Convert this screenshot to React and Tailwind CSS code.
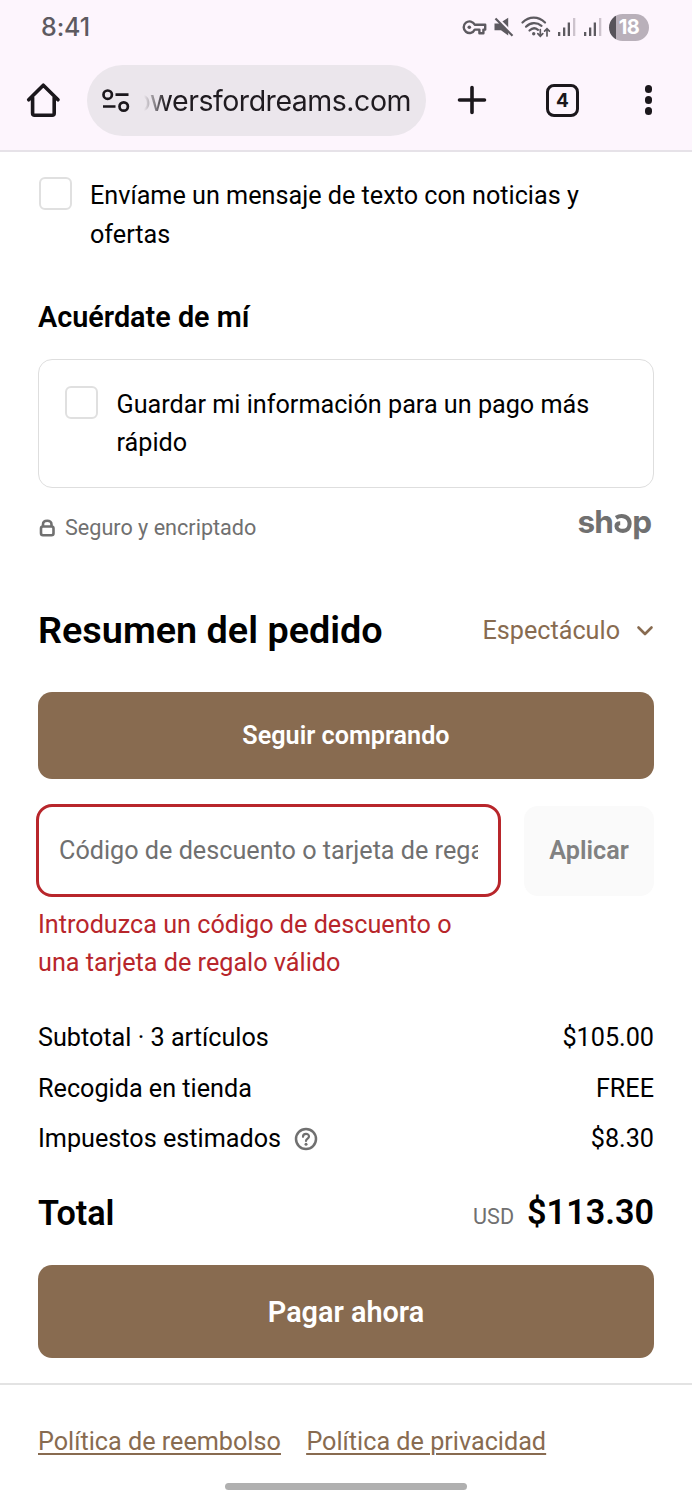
import React from "react";

const summaryRows = [
    { label: "Subtotal · 3 artículos", value: "$105.00" },
    { label: "Recogida en tienda", value: "FREE" },
    { label: "Impuestos estimados", value: "$8.30", help: true },
];

function SignalIcon() {
    return (
        <svg width="18" height="20" viewBox="0 0 18 20" fill="#5d5a60">
            <rect x="0" y="15" width="2.300" height="4" />
            <rect x="5" y="10.500" width="2.300" height="8.500" />
            <rect x="9.700" y="5.500" width="2.300" height="13.500" />
            <rect x="15" y="1" width="2.300" height="18" fill="#cdc3cd" />
        </svg>
    );
}

function StatusBar() {
    return (
        <div className="h-[54px] pl-[41px] pr-[43px] flex items-center justify-between text-[#5d5a60]">
            <span className="font-['Inter'] text-[25px] leading-none font-medium tracking-[-0.1px]">8:41</span>
            <div className="flex items-center">
                <svg width="25" height="18" viewBox="0 0 25 18" fill="none" stroke="#5d5a60" strokeWidth="2.400" strokeLinejoin="round" className="mt-[2px]">
                    <path d="M12.800 5.800H23.200V10.600H21.400V14.200H17.400V10.600H12.800A5.800 5.800 0 1 1 12.800 5.800Z" />
                    <circle cx="7.300" cy="8.200" r="1.800" fill="#5d5a60" stroke="none" />
                </svg>
                <svg width="20" height="20" viewBox="0 0 20 20" className="ml-[7px]">
                    <path d="M0.500 6.500H5.200L14.200 0.800V18.600L7 13.300H0.500Z" fill="#5d5a60" />
                    <path d="M0.500 -1.500L20.500 18.500" stroke="#fdf5fd" strokeWidth="3" />
                    <path d="M1.500 1.500L18.500 18.800" stroke="#5d5a60" strokeWidth="2.200" />
                </svg>
                <svg width="30" height="22" viewBox="0 0 30 22" fill="none" stroke="#5d5a60" strokeWidth="2.200" strokeLinecap="round" className="ml-[7px]">
                    <path d="M1.500 6.500C8 0 17.500 0 24 6.500" />
                    <path d="M5 10.700C9.500 6 16 6 20.500 9.800" />
                    <path d="M8.500 14.500C11.300 11.800 14.500 11.800 17 13.800" />
                    <circle cx="12.700" cy="17.800" r="1.700" fill="#5d5a60" stroke="none" />
                    <path d="M19.300 13.500V20M16.800 17.700L19.300 20.200L21.800 17.700M26 20V13M23.600 15.200L26 12.700L28.400 15.200" strokeWidth="1.700" />
                </svg>
                <span className="ml-[7px]"><SignalIcon /></span>
                <span className="ml-[8px]"><SignalIcon /></span>
                <div className="ml-[7px] w-[40px] h-[27px] rounded-full overflow-hidden bg-[linear-gradient(to_right,#57535a_7px,#b9b0ba_7px)] flex items-center justify-center text-white font-['Inter'] text-[20px] leading-none font-bold tracking-[-0.5px]">
                    18
                </div>
            </div>
        </div>
    );
}

function BrowserBar() {
    return (
        <div className="h-[96px] pb-[4px] pl-[26px] pr-[42px] flex items-center">
            <svg width="35" height="36" viewBox="0 0 35 36" fill="none" stroke="#1b171c" strokeWidth="3.600" strokeLinecap="round" strokeLinejoin="round">
                <path d="M2.700 17.800L17.300 3.200L32 17.800M6.600 15.500V31.200Q6.600 33.200 8.600 33.200H26.200Q28.200 33.200 28.200 31.200V15.500" />
            </svg>
            <div className="ml-[26px] w-[339px] h-[71px] rounded-full bg-[#ebe6ec] flex items-center pl-[15px] pt-[1px]">
                <svg width="28" height="24" viewBox="0 0 28 24" fill="none" stroke="#1b171c" strokeWidth="2.700">
                    <circle cx="5.700" cy="5.700" r="4.200" />
                    <path d="M13.500 5.700H26.500M1 17.500H13.500" />
                    <circle cx="21.700" cy="17.500" r="4.200" />
                </svg>
                <div className="ml-[14px] w-[267px] h-[40px] overflow-hidden flex justify-end [mask-image:linear-gradient(to_right,transparent,black_22px)]">
                    <span className="font-['Inter'] text-[28.5px] leading-[40px] tracking-[-0.48px] text-[#1f1b20] whitespace-nowrap">
                        flowersfordreams.com
                    </span>
                </div>
            </div>
            <svg width="30" height="30" viewBox="0 0 30 30" stroke="#1b171c" strokeWidth="3.600" strokeLinecap="round" className="ml-[31px]">
                <path d="M15 2.500V27.500M2.500 15H27.500" />
            </svg>
            <div className="ml-[59px] size-[33px] rounded-[8px] border-[3.5px] border-[#1b171c] flex items-center justify-center font-['Inter'] text-[19px] leading-none font-bold text-[#1b171c]">
                4
            </div>
            <div className="ml-auto mr-[-2px] flex flex-col gap-[3.5px]">
                <span className="size-[7.5px] rounded-full bg-[#1b171c]" />
                <span className="size-[7.5px] rounded-full bg-[#1b171c]" />
                <span className="size-[7.5px] rounded-full bg-[#1b171c]" />
            </div>
        </div>
    );
}

function Checkbox() {
    return <span className="shrink-0 size-[33px] rounded-[6px] border-2 border-[#e0e0e0] bg-white" />;
}

function ShopLogo() {
    return (
        <div className="flex items-baseline font-['Inter'] font-bold text-[31.500px] leading-[34px] text-[#707070]">
            <span className="tracking-[-0.8px]">sh</span>
            <svg width="18" height="20" viewBox="0 0 18 20" fill="none" stroke="#707070" strokeWidth="4.100" className="ml-[1px] mr-[0px]">
                <path d="M2 4.800C8.300 0.800 15.600 4 15.600 10.800C15.600 15.300 12.800 17.900 9 17.900C5.400 17.900 2.500 16 2.500 13.200C2.500 11.300 4 10.200 6.200 10.200" />
            </svg>
            <span>p</span>
        </div>
    );
}

export default function App() {
    return (
        <div className="w-full h-[1500px] overflow-hidden bg-white text-black font-['Roboto',sans-serif] text-[25.2px] leading-[38px]">
            <header className="h-[152px] bg-[#fdf5fd] border-b-2 border-[#e6e2e8]">
                <StatusBar />
                <BrowserBar />
            </header>

            <main className="px-[38px] pt-[25px]">
                <label className="flex items-start gap-[18px] pl-px">
                    <span className="flex"><Checkbox /></span>
                    <span className="leading-[38.500px]">Envíame un mensaje de texto con noticias y<br />ofertas</span>
                </label>

                <h2 className="mt-[43px] h-[40px] leading-[40px] text-[28.8px] font-semibold">Acuérdate de mí</h2>

                <div className="mt-[22px] h-[129px] rounded-[14px] border border-[#dedede] pl-[26px] pt-[26px]">
                    <label className="flex items-start gap-[18.5px]">
                        <span className="flex"><Checkbox /></span>
                        <span>Guardar mi información para un pago más<br />rápido</span>
                    </label>
                </div>

                <div className="mt-[21px] h-[38px] flex items-center justify-between text-[#707070]">
                    <div className="flex items-center text-[21.6px]">
                        <svg width="17" height="18" viewBox="0 0 17 18" fill="none" stroke="#707070" strokeWidth="2.600" className="ml-px mr-[9px]">
                            <rect x="2" y="7.500" width="12.500" height="8.700" rx="2" />
                            <path d="M4 7.500V5.500C4 3.300 5.700 1.800 8.250 1.800S12.500 3.300 12.500 5.500V7.500" />
                        </svg>
                        Seguro y encriptado
                    </div>
                    <div className="pr-[2px] pb-[12px]"><ShopLogo /></div>
                </div>

                <div className="mt-[59px] h-[48px] flex items-center justify-between">
                    <h1 className="text-[37.8px] font-semibold">Resumen del pedido</h1>
                    <button className="flex items-center pt-[2px] text-[#886b50]">
                        Espectáculo
                        <svg width="18" height="12" viewBox="0 0 18 12" fill="none" stroke="#886b50" strokeWidth="2.600" strokeLinecap="round" strokeLinejoin="round" className="ml-[16px]">
                            <path d="M2.500 2.500L9 9L15.500 2.500" />
                        </svg>
                    </button>
                </div>

                <button className="mt-[38px] w-full h-[87px] rounded-[14px] bg-[#886b50] text-white font-semibold">Seguir comprando</button>

                <div className="mt-[25px] flex items-center justify-between">
                    <div className="ml-[-2px] w-[465px] h-[93px] rounded-[16px] border-[3px] border-[#b8262b] px-[20px] flex items-center">
                        <div className="overflow-hidden whitespace-nowrap text-[#707070]">Código de descuento o tarjeta de regalo</div>
                    </div>
                    <button className="w-[130px] h-[90px] rounded-[14px] bg-[#fafafa] text-[#818181] font-semibold">Aplicar</button>
                </div>
                <p className="mt-[9px] text-[#b8262b]">Introduzca un código de descuento o<br />una tarjeta de regalo válido</p>

                <div className="mt-[31px]">
                    {summaryRows.map((row) => (
                        <div key={row.label} className="h-[50.5px] flex items-center justify-between">
                            <span className="flex items-center">
                                {row.label}
                                {row.help && (
                                    <svg width="24" height="24" viewBox="0 0 24 24" fill="none" stroke="#707070" strokeWidth="2.500" className="ml-[13px]">
                                        <circle cx="12" cy="12" r="10" />
                                        <path d="M9 9.800C9 5.800 15 5.900 15 9.600C15 11.600 12 11.700 12 14" strokeLinecap="round" strokeWidth="2.200" />
                                        <circle cx="12" cy="17.200" r="1.500" fill="#707070" stroke="none" />
                                    </svg>
                                )}
                            </span>
                            <span>{row.value}</span>
                        </div>
                    ))}
                </div>

                <div className="mt-[24px] h-[48px] flex items-center justify-between">
                    <span className="text-[34.2px] font-semibold">Total</span>
                    <div className="flex items-baseline gap-[13px] pt-[3px]">
                        <span className="text-[21.6px] text-[#707070]">USD</span>
                        <span className="text-[34.2px] font-semibold">$113.30</span>
                    </div>
                </div>

                <button className="mt-[28.500px] w-full h-[93px] rounded-[14px] bg-[#886b50] text-white text-[28.8px] font-semibold">Pagar ahora</button>
            </main>

            <footer className="mt-[25px] border-t-2 border-[#e3e3e3] pt-[38px]">
                <nav className="h-[38px] px-[38px] flex gap-[25.500px] text-[#886b50] underline underline-offset-[3px] decoration-2">
                    <a>Política de reembolso</a>
                    <a>Política de privacidad</a>
                </nav>
                <div className="mt-[22px] mx-auto w-[242px] h-[7px] rounded-full bg-[#b0b0b0]" />
            </footer>
        </div>
    );
}
